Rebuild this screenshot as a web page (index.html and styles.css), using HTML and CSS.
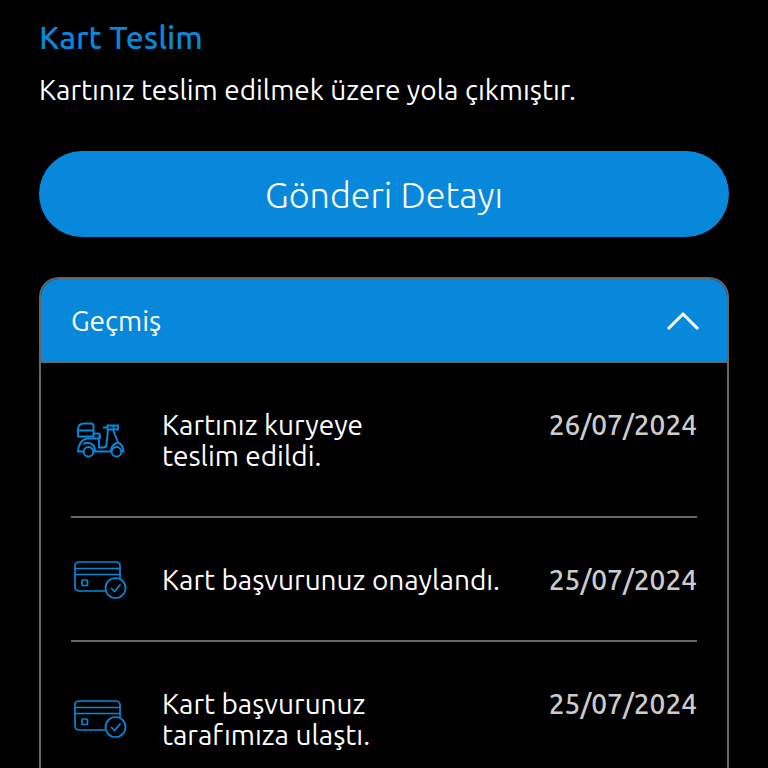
FILE: index.html
```html
<!DOCTYPE html>
<html lang="tr">
<head>
<meta charset="utf-8">
<meta name="viewport" content="width=device-width, initial-scale=1">
<title>Kart Teslim</title>
<link rel="stylesheet" href="styles.css">
</head>
<body>
<svg class="sprite" aria-hidden="true">
  <symbol id="card" viewBox="0 0 60 40">
    <g stroke-width="1.7">
      <path d="M34 31H8a4 4 0 0 1-4-4V6a4 4 0 0 1 4-4h37a4 4 0 0 1 4 4v12.500M4 8.500h45M4 14.500h45"/>
      <rect x="11" y="20" width="5.500" height="5.500" rx="1"/>
      <circle cx="44.500" cy="28" r="10"/>
      <path d="m40 28 3.500 3.500 6-7"/>
    </g>
  </symbol>
  <symbol id="scooter" viewBox="0 0 60 40">
    <g stroke-width="1.9">
      <path d="M13 3.500h7q2.500 0 2.500 2.500V16.500H7V10q0-6.500 6-6.500ZM7 10.500h15.500"/>
      <path d="M22.500 13.500h4q2.500 0 2.500 2v2h-1v10h4q3.500 0 3.500-3L37 9.500"/>
      <path d="M28 18.500H16Q8 20 7 31.500h5.500M22.500 31.500H40q0-7 7-9l-5-13M47 22.500q5 2 5.500 9h-2M12 24q6-3 10 1 2 2 2 6.500"/>
      <path d="M32 7.500h5M36.500 5.500h10.500v4H36.500ZM42.500 5.500v4"/>
      <circle cx="17.500" cy="31.800" r="4.800"/>
      <circle cx="45.500" cy="31.800" r="4.800"/>
    </g>
  </symbol>
</svg>
<main class="page">
  <h1 class="title">Kart Teslim</h1>
  <p class="lead">Kartınız teslim edilmek üzere yola çıkmıştır.</p>
  <button class="detail" type="button">Gönderi Detayı</button>
  <section class="history">
    <button class="history-head" type="button" aria-expanded="true" aria-controls="steps">
      Geçmiş
      <svg class="chevron" viewBox="0 0 34 20" aria-hidden="true"><path d="M2 18 17 3l15 15"/></svg>
    </button>
    <ul class="steps" id="steps">
      <li class="step">
        <svg class="icon" aria-hidden="true"><use href="#scooter"/></svg>
        <span class="text">Kartınız kuryeye<br>teslim edildi.</span>
        <time class="date" datetime="2024-07-26">26/07/2024</time>
      </li>
      <li class="step">
        <svg class="icon" aria-hidden="true"><use href="#card"/></svg>
        <span class="text">Kart başvurunuz onaylandı.</span>
        <time class="date" datetime="2024-07-25">25/07/2024</time>
      </li>
      <li class="step">
        <svg class="icon" aria-hidden="true"><use href="#card"/></svg>
        <span class="text">Kart başvurunuz<br>tarafımıza ulaştı.</span>
        <time class="date" datetime="2024-07-25">25/07/2024</time>
      </li>
    </ul>
  </section>
</main>
</body>
</html>
```
FILE: styles.css
```css
* {
  box-sizing: border-box;
}

body {
  height: 100vh;
  margin: 0;
  overflow: hidden;
  background: #000;
  color: #fff;
  font-family: Ubuntu, "Noto Sans", sans-serif;
  font-size: 28px;
  line-height: 31px;
}

button {
  border: 0;
  color: inherit;
  font: inherit;
  cursor: pointer;
}

.sprite {
  display: none;
}

.page {
  padding: 19px 39px 0;
}

.title {
  margin: 0;
  color: #0788db;
  font-size: 32px;
  font-weight: 500;
  line-height: 36px;
}

.lead {
  margin: 19px 0 0;
}

.detail {
  display: block;
  width: 100%;
  height: 86px;
  margin-top: 46px;
  border-radius: 43px;
  background: #0788db;
  font-size: 36px;
  font-weight: 300;
}

.history {
  margin-top: 40px;
  border: 2px solid #666;
  border-bottom: 0;
  border-radius: 20px 20px 0 0;
  overflow: hidden;
}

.history-head {
  display: flex;
  align-items: center;
  justify-content: space-between;
  width: 100%;
  height: 83px;
  padding: 0 27px 0 30px;
  background: #0788db;
}

.chevron {
  width: 34px;
  height: 20px;
  fill: none;
  stroke: #fff;
  stroke-width: 3;
}

.steps {
  margin: 0;
  padding: 0 30px;
  border-top: 1px solid #666;
  list-style: none;
}

.step {
  display: grid;
  grid-template-columns: 60px 1fr auto;
  column-gap: 31px;
  align-items: center;
  padding: 46px 0 45px;
}

.step + .step {
  border-top: 2px solid #666;
}

.icon {
  width: 60px;
  height: 40px;
  margin: -5px 0;
  fill: none;
  stroke: #0788db;
}

.text {
  white-space: nowrap;
}

.date {
  align-self: start;
  color: #ccc;
  font-weight: 500;
}
```
